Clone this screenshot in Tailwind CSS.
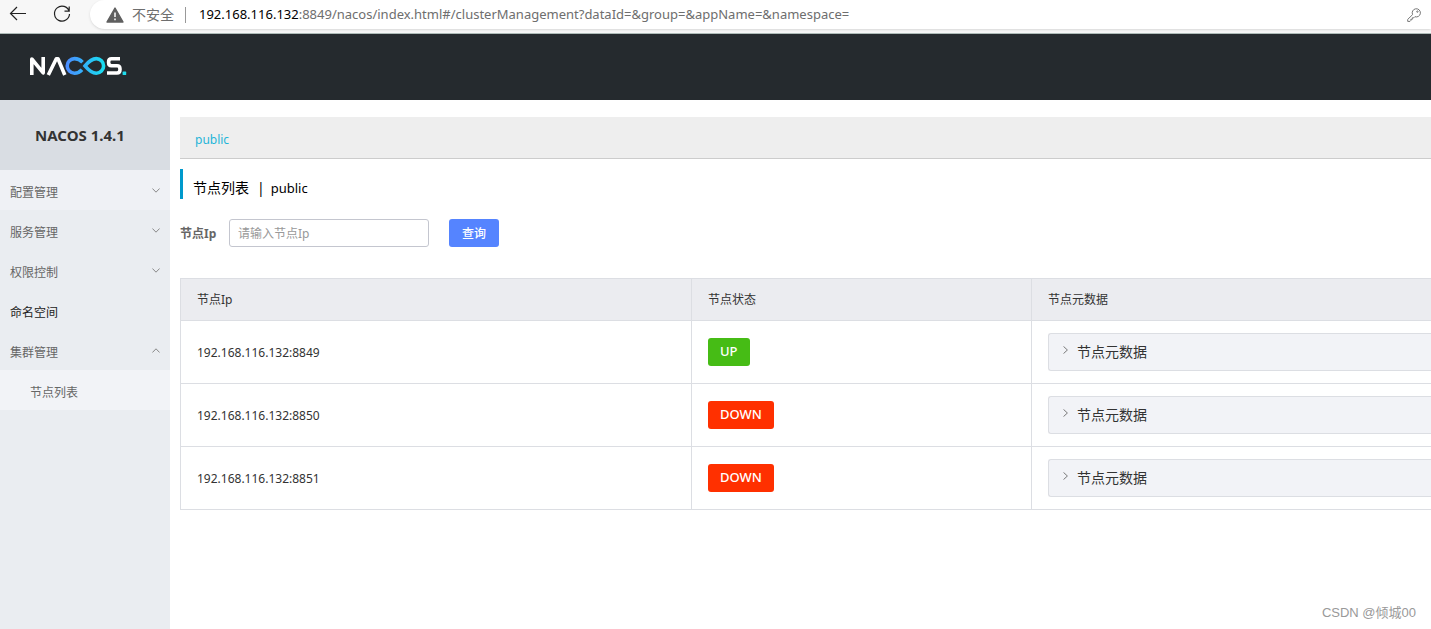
<!DOCTYPE html>
<html lang="zh-CN">
<head>
<meta charset="utf-8">
<title>Nacos</title>
<script src="https://cdn.jsdelivr.net/npm/@tailwindcss/browser@4"></script>
</head>
<body class="flex flex-col min-h-screen overflow-x-hidden bg-white font-['Noto_Sans','Noto_Sans_CJK_SC',sans-serif] text-xs text-[#333]">

<div class="flex h-[34px] shrink-0 items-start border-b border-[#aebbb8] bg-[#f7f7f7]">
  <button aria-label="后退" class="ml-2 mt-1 h-5 w-5"><svg viewBox="0 0 20 20" class="h-5 w-5" fill="none" stroke="#222" stroke-width="1.2"><path d="M18 9.5H2.5M9 3L2.5 9.5L9 16"/></svg></button>
  <button aria-label="刷新" class="ml-6 mt-1 h-5 w-5"><svg viewBox="0 0 20 20" class="h-5 w-5" fill="none" stroke="#222" stroke-width="1.2"><path d="M17.2 7.5A7.5 7.5 0 1 0 17.5 10M17.2 2.5V7.2H12.5"/></svg></button>
  <div class="ml-[18px] flex h-[29px] flex-1 items-center rounded-l-full bg-white pl-4 text-[13px] text-[#6e6e6e] shadow-sm">
    <svg viewBox="0 0 18 16" class="h-4 w-[18px]"><path d="M9 1L17 15H1Z" fill="#5f5f5f" stroke="#5f5f5f" stroke-width="1.4" stroke-linejoin="round"/><path d="M9 5.5V10M9 11.5V13.3" stroke="#fff" stroke-width="1.5"/></svg>
    <span class="ml-2 text-sm">不安全</span>
    <span class="ml-[11px] mr-[13px] h-4 w-px bg-[#999]"></span>
    <span class="flex-1 whitespace-nowrap"><span class="text-black">192.168.116.132</span>:8849/nacos/index.html#/clusterManagement?dataId=&amp;group=&amp;appName=&amp;namespace=</span>
    <svg viewBox="0 0 16 16" class="mr-[9px] h-4 w-4" fill="none" stroke="#777" stroke-width="1"><path d="M6.6 7.6A4.1 4.1 0 1 1 8.9 9.7L7.8 10.8H6.3V12.3H4.8V13.6L4 14.4H1.7V12.4Z" stroke-linejoin="round"/><circle cx="11.4" cy="4.6" r=".7"/></svg>
  </div>
</div>

<header class="flex h-[66px] shrink-0 items-center bg-[#252a2e] pb-[2px] pl-[29px]">
  <a href="#" aria-label="Nacos">
    <svg viewBox="0 0 98 20" class="h-5 w-[98px]" fill="none" stroke-width="3.6">
      <defs><linearGradient id="g" gradientUnits="userSpaceOnUse" x1="37" y1="0" x2="76" y2="0"><stop offset="0" stop-color="#4b8bff"/><stop offset="1" stop-color="#17e0f0"/></linearGradient></defs>
      <g stroke="#fff" stroke-linejoin="round"><path d="M2.8 19V3L14.2 16.8V1"/><path d="M19.3 19L27.3 2.8H29L35.8 19"/><path d="M91 2.8H82.5Q79.6 2.8 79.6 6V6.6Q79.6 9.8 82.5 9.8H88Q91 9.8 91 13V13.5Q91 17 88 17H78"/></g>
      <path d="M53.5 6.2C51 3.6 48.5 2.6 45.5 2.6A7.3 7.3 0 0 0 45.5 17.2C48.5 17.2 51 16 53 13.8" stroke="url(#g)"/>
      <path d="M56 9.9C60 5 63 2.6 67.3 2.6A7.3 7.3 0 0 1 67.3 17.2C63 17.2 60 14.8 56 9.9Z" stroke="url(#g)"/>
      <rect x="93.6" y="15.6" width="3.6" height="3.4" rx=".6" fill="#20dcec"/>
    </svg>
  </a>
</header>

<div class="flex flex-1">
  <aside class="w-[170px] shrink-0 bg-[#eaedf1]">
    <h1 class="flex h-[70px] items-center justify-center bg-[#d9dde3] pr-[10px] text-[15px] font-bold">NACOS 1.4.1</h1>
    <nav class="text-[#666]">
      <button class="flex h-10 w-full items-center justify-between bg-[#eff1f5] px-[10px]"><span class="pt-[6px]">配置管理</span><svg viewBox="0 0 8 5" class="h-[5px] w-2" fill="none" stroke="#888"><path d="M.4.5L4 4.2L7.6.5"/></svg></button>
      <button class="flex h-10 w-full items-center justify-between px-[10px]"><span class="pt-[6px]">服务管理</span><svg viewBox="0 0 8 5" class="h-[5px] w-2" fill="none" stroke="#888"><path d="M.4.5L4 4.2L7.6.5"/></svg></button>
      <button class="flex h-10 w-full items-center justify-between px-[10px]"><span class="pt-[6px]">权限控制</span><svg viewBox="0 0 8 5" class="h-[5px] w-2" fill="none" stroke="#888"><path d="M.4.5L4 4.2L7.6.5"/></svg></button>
      <a href="#" class="flex h-10 items-center px-[10px] text-[#222]"><span class="pt-[6px]">命名空间</span></a>
      <button class="flex h-10 w-full items-center justify-between px-[10px]"><span class="pt-[6px]">集群管理</span><svg viewBox="0 0 8 5" class="h-[5px] w-2" fill="none" stroke="#888"><path d="M.4 4.5L4 .8L7.6 4.5"/></svg></button>
      <a href="#" class="flex h-10 items-center bg-[#f2f3f7] px-[30px]"><span class="pt-[6px]">节点列表</span></a>
    </nav>
  </aside>

  <main class="flex min-w-0 flex-1 flex-col pl-[10px] pt-[17px]">
    <div class="flex h-[42px] items-center border-b border-[#ccc] bg-[#eee] px-[15px] pt-1"><a href="#" class="text-[#1fb5d8]">public</a></div>
    <h2 class="mt-[10px] flex h-[30px] items-center border-l-3 border-[#09c] pl-[10px] pt-2 text-sm text-black"><span>节点列表</span><span class="ml-2 mr-[6px]">|</span><span class="text-[13px]">public</span></h2>
    <form class="mt-5 flex items-center">
      <label for="ip" class="w-[49px] pt-[2px] font-bold text-[#666]">节点Ip</label>
      <input id="ip" type="text" placeholder="请输入节点Ip" class="h-7 w-[200px] rounded-[3px] border border-[#c4c6cf] px-2 placeholder:text-[#999]">
      <button type="button" class="ml-5 h-7 w-[50px] rounded-[3px] bg-[#5584ff] pt-[2px] font-medium text-white">查询</button>
    </form>
    <table class="mt-[31px] w-full table-fixed border-separate border-spacing-0 border-l border-t border-[#dcdee3] text-left">
      <colgroup><col class="w-[511px]"><col class="w-[340px]"><col></colgroup>
      <thead>
        <tr class="h-[42px] bg-[#ebecf0]">
          <th class="border-b border-r border-[#dcdee3] px-4 font-normal">节点Ip</th>
          <th class="border-b border-r border-[#dcdee3] px-4 font-normal">节点状态</th>
          <th class="border-b border-[#dcdee3] px-4 font-normal">节点元数据</th>
        </tr>
      </thead>
      <tbody>
        <tr class="h-[63px]">
          <td class="border-b border-r border-[#dcdee3] px-4 pt-[2px]">192.168.116.132:8849</td>
          <td class="border-b border-r border-[#dcdee3] px-4"><button class="block h-7 rounded-[3px] bg-[#46bc15] px-3 text-[13px] font-medium text-white">UP</button></td>
          <td class="border-b border-[#dcdee3] pl-4"><button class="flex h-[38px] w-full items-center rounded-l-[3px] border border-r-0 border-[#dcdee3] bg-[#f2f3f7] pl-[14px] text-sm"><svg viewBox="0 0 5 8" class="mr-[9px] mb-1 h-2 w-[5px]" fill="none" stroke="#777"><path d="M.5.4L4.4 4L.5 7.6"/></svg>节点元数据</button></td>
        </tr>
        <tr class="h-[63px]">
          <td class="border-b border-r border-[#dcdee3] px-4 pt-[2px]">192.168.116.132:8850</td>
          <td class="border-b border-r border-[#dcdee3] px-4"><button class="block h-7 rounded-[3px] bg-[#ff3000] px-3 text-[13px] font-medium text-white">DOWN</button></td>
          <td class="border-b border-[#dcdee3] pl-4"><button class="flex h-[38px] w-full items-center rounded-l-[3px] border border-r-0 border-[#dcdee3] bg-[#f2f3f7] pl-[14px] text-sm"><svg viewBox="0 0 5 8" class="mr-[9px] mb-1 h-2 w-[5px]" fill="none" stroke="#777"><path d="M.5.4L4.4 4L.5 7.6"/></svg>节点元数据</button></td>
        </tr>
        <tr class="h-[63px]">
          <td class="border-b border-r border-[#dcdee3] px-4 pt-[2px]">192.168.116.132:8851</td>
          <td class="border-b border-r border-[#dcdee3] px-4"><button class="block h-7 rounded-[3px] bg-[#ff3000] px-3 text-[13px] font-medium text-white">DOWN</button></td>
          <td class="border-b border-[#dcdee3] pl-4"><button class="flex h-[38px] w-full items-center rounded-l-[3px] border border-r-0 border-[#dcdee3] bg-[#f2f3f7] pl-[14px] text-sm"><svg viewBox="0 0 5 8" class="mr-[9px] mb-1 h-2 w-[5px]" fill="none" stroke="#777"><path d="M.5.4L4.4 4L.5 7.6"/></svg>节点元数据</button></td>
        </tr>
      </tbody>
    </table>
    <p class="mt-auto pb-2 pr-[15px] text-right font-['Liberation_Sans','Noto_Sans_CJK_SC',sans-serif] text-[13px] text-[#999]">CSDN @倾城00</p>
  </main>
</div>
</body>
</html>
